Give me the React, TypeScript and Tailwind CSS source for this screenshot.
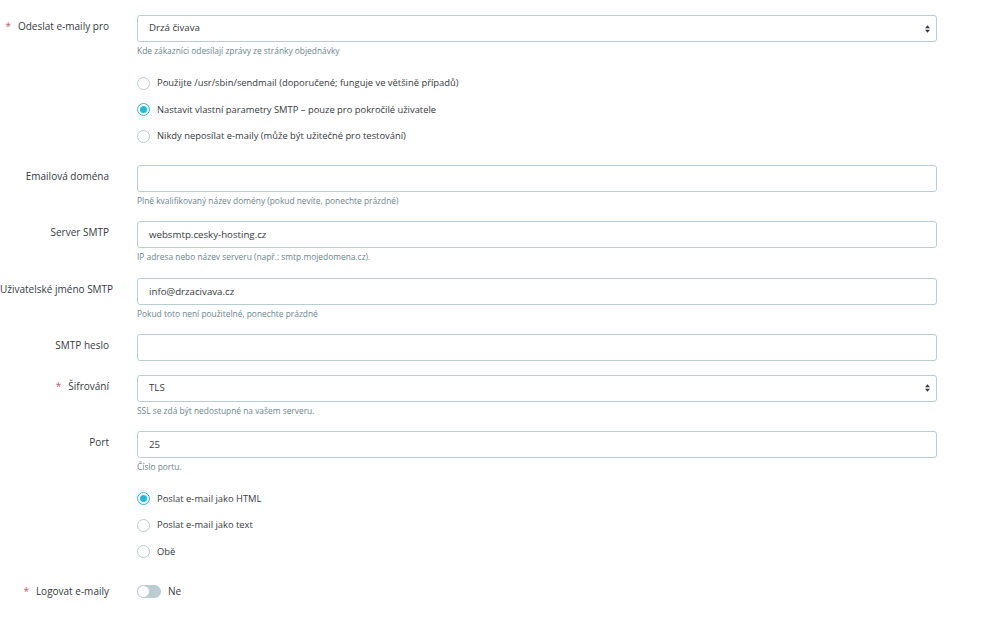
import { useState } from "react";

const font = { fontFamily: '"Open Sans", "Noto Sans", sans-serif' };

function Label({ text, required }: { text: string; required?: boolean }) {
  return (
    <div className="w-[109px] shrink-0 pt-[4px] text-right text-[10px] leading-[15px] text-[#363a41] whitespace-nowrap">
      {required && <span className="mr-[7px] text-[#c05c67]">*</span>}
      {text}
    </div>
  );
}

function Help({ children }: { children: string }) {
  return <p className="mt-[3px] text-[8.4px] leading-[12px] text-[#6c868e]">{children}</p>;
}

function TextInput({ value }: { value: string }) {
  return (
    <div className="h-[27px] w-[800px] rounded-[3px] border border-[#bbcdd2] bg-white px-[11px] text-[9.7px] leading-[25px] text-[#363a41]">
      {value}
    </div>
  );
}

function Select({ value }: { value: string }) {
  return (
    <div className="flex h-[27px] w-[800px] items-center justify-between rounded-[3px] border border-[#bbcdd2] bg-white pl-[11px] pr-[6px] text-[9.7px] text-[#363a41]">
      <span>{value}</span>
      <svg width="5" height="8" viewBox="0 0 6 9">
        <path d="M3 0L6 3.5H0Z M3 9L0 5.5H6Z" fill="#363a41" />
      </svg>
    </div>
  );
}

function Radio({ label, checked, onClick }: { label: string; checked: boolean; onClick: () => void }) {
  return (
    <button type="button" onClick={onClick} className="flex h-[26.5px] items-center gap-[7px] text-left text-[9.4px] text-[#363a41]">
      <span
        className={
          "flex h-[13px] w-[13px] items-center justify-center rounded-full border bg-white " +
          (checked ? "border-[#25b9d7]" : "border-[#bbcdd2]")
        }
      >
        {checked && <span className="h-[7px] w-[7px] rounded-full bg-[#25b9d7]" />}
      </span>
      {label}
    </button>
  );
}

function Row({ label, required, children, className }: { label?: string; required?: boolean; children: React.ReactNode; className?: string }) {
  return (
    <div className={"flex gap-[28px] " + (className ?? "")}>
      {label !== undefined ? <Label text={label} required={required} /> : <div className="w-[109px] shrink-0" />}
      <div>{children}</div>
    </div>
  );
}

export default function App() {
  const [method, setMethod] = useState(1);
  const [format, setFormat] = useState(0);
  const [log, setLog] = useState(false);

  const methods = [
    "Použijte /usr/sbin/sendmail (doporučené; funguje ve většině případů)",
    "Nastavit vlastní parametry SMTP – pouze pro pokročilé uživatele",
    "Nikdy neposílat e-maily (může být užitečné pro testování)",
  ];
  const formats = ["Poslat e-mail jako HTML", "Poslat e-mail jako text", "Obě"];

  return (
    <div className="min-h-[627px] w-[1000px] overflow-hidden bg-white pt-[15px]" style={font}>
      <Row label="Odeslat e-maily pro" required>
        <Select value="Drzá čivava" />
        <Help>Kde zákazníci odesílají zprávy ze stránky objednávky</Help>
      </Row>

      <Row className="mt-[13px]">
        {methods.map((m, i) => (
          <Radio key={m} label={m} checked={method === i} onClick={() => setMethod(i)} />
        ))}
      </Row>

      <Row label="Emailová doména" className="mt-[15px]">
        <TextInput value="" />
        <Help>Plně kvalifikovaný název domény (pokud nevíte, ponechte prázdné)</Help>
      </Row>

      <Row label="Server SMTP" className="mt-[14px]">
        <TextInput value="websmtp.cesky-hosting.cz" />
        <Help>IP adresa nebo název serveru (např.: smtp.mojedomena.cz).</Help>
      </Row>

      <Row label="Uživatelské jméno SMTP" className="mt-[15px]">
        <TextInput value="info@drzacivava.cz" />
        <Help>Pokud toto není použitelné, ponechte prázdné</Help>
      </Row>

      <Row label="SMTP heslo" className="mt-[14px]">
        <TextInput value="" />
      </Row>

      <Row label="Šifrování" required className="mt-[14px]">
        <Select value="TLS" />
        <Help>SSL se zdá být nedostupné na vašem serveru.</Help>
      </Row>

      <Row label="Port" className="mt-[14px]">
        <TextInput value="25" />
        <Help>Číslo portu.</Help>
      </Row>

      <Row className="mt-[13px]">
        {formats.map((f, i) => (
          <Radio key={f} label={f} checked={format === i} onClick={() => setFormat(i)} />
        ))}
      </Row>

      <div className="mt-[19px] flex items-center gap-[28px]">
        <div className="w-[109px] shrink-0 text-right text-[10px] text-[#363a41]">
          <span className="mr-[7px] text-[#c05c67]">*</span>Logovat e-maily
        </div>
        <button type="button" onClick={() => setLog(!log)} className="flex items-center gap-[7px] text-[10px] text-[#363a41]">
          <span className={"relative h-[13px] w-[24px] rounded-full " + (log ? "bg-[#25b9d7]" : "bg-[#bbcdd2]")}>
            <span
              className={
                "absolute top-0 h-[13px] w-[13px] rounded-full border border-[#bbcdd2] bg-white " + (log ? "left-[11px]" : "left-0")
              }
            />
          </span>
          {log ? "Ano" : "Ne"}
        </button>
      </div>
    </div>
  );
}
